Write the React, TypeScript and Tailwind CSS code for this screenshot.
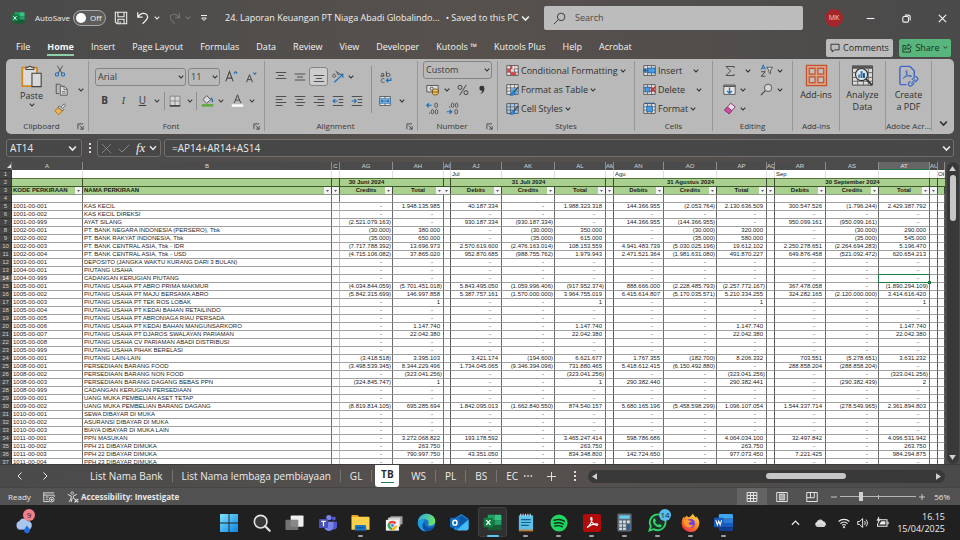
import type { ReactNode } from "react"
import clsx from "clsx"

/* ------------------------------------------------------------------ data */

type Row = [code: string, name: string, values: string]

// Values run Jun (credits, total), Jul, Agu, Sep (debits, credits, total each).
const EMPTY = "- - - - - - - - - - -"

const ROWS: Row[] = [
  ["1001-00-001", "KAS KECIL", "- 1.948.135.985 40.187.334 - 1.988.323.318 144.366.955 (2.053.764) 2.130.636.509 300.547.526 (1.796.244) 2.429.387.792"],
  ["1001-00-002", "KAS KECIL DIREKSI", EMPTY],
  ["1001-00-999", "AYAT SILANG", "(2.521.079.163) - 930.187.334 (930.187.334) - 144.366.955 (144.366.955) - 950.099.161 (950.099.161) -"],
  ["1002-00-001", "PT. BANK NEGARA INDONESIA (PERSERO), Tbk", "(30.000) 380.000 - (30.000) 350.000 - (30.000) 320.000 - (30.000) 290.000"],
  ["1002-00-002", "PT. BANK RAKYAT INDONESIA, Tbk", "(35.000) 650.000 - (35.000) 615.000 - (35.000) 580.000 - (35.000) 545.000"],
  ["1002-00-003", "PT. BANK CENTRAL ASIA, Tbk - IDR", "(7.717.788.392) 13.696.973 2.570.619.600 (2.476.163.014) 108.153.559 4.941.483.739 (5.030.025.196) 19.612.102 2.250.278.651 (2.264.694.283) 5.196.470"],
  ["1002-00-004", "PT. BANK CENTRAL ASIA, Tbk - USD", "(4.715.106.082) 37.865.020 952.870.685 (988.755.762) 1.979.943 2.471.521.364 (1.981.631.080) 491.870.227 649.876.458 (521.092.472) 620.654.213"],
  ["1003-00-001", "DEPOSITO (JANGKA WAKTU KURANG DARI 3 BULAN)", EMPTY],
  ["1004-00-001", "PIUTANG USAHA", EMPTY],
  ["1004-00-999", "CADANGAN KERUGIAN PIUTANG", EMPTY],
  ["1005-00-001", "PIUTANG USAHA PT ABRO PRIMA MAKMUR", "(4.034.844.059) (5.701.451.018) 5.843.495.050 (1.059.996.406) (917.952.374) 888.666.000 (2.228.485.793) (2.257.772.167) 367.478.058 - (1.890.294.109)"],
  ["1005-00-002", "PIUTANG USAHA PT MAJU BERSAMA ABRO", "(5.842.315.699) 146.997.858 5.387.757.161 (1.570.000.000) 3.964.755.019 6.415.614.807 (5.170.035.571) 5.210.334.255 324.282.165 (2.120.000.000) 3.414.616.420"],
  ["1005-00-003", "PIUTANG USAHA PT TEK ROS LOBAK", "- 1 - - 1 - - 1 - - 1"],
  ["1005-00-004", "PIUTANG USAHA PT KEDAI BAHAN RETAILINDO", EMPTY],
  ["1005-00-005", "PIUTANG USAHA PT ABRONIAGA RIAU PERSADA", EMPTY],
  ["1005-00-006", "PIUTANG USAHA PT KEDAI BAHAN MANGUNSARKORO", "- 1.147.740 - - 1.147.740 - - 1.147.740 - - 1.147.740"],
  ["1005-00-007", "PIUTANG USAHA PT DJAROS SWALAYAN PARIAMAN", "- 22.042.380 - - 22.042.380 - - 22.042.380 - - 22.042.380"],
  ["1005-00-008", "PIUTANG USAHA CV PARIAMAN ABADI DISTRIBUSI", EMPTY],
  ["1005-00-999", "PIUTANG USAHA PIHAK BERELASI", EMPTY],
  ["1006-00-001", "PIUTANG LAIN-LAIN", "(3.418.518) 3.395.103 3.421.174 (194.600) 6.621.677 1.767.355 (182.700) 8.206.332 703.551 (5.278.651) 3.631.232"],
  ["1008-00-001", "PERSEDIAAN BARANG FOOD", "(3.498.539.345) 8.344.229.496 1.734.045.065 (9.346.394.096) 731.880.465 5.418.612.415 (6.150.492.880) - 288.858.204 (288.858.204) -"],
  ["1008-00-002", "PERSEDIAAN BARANG NON FOOD", "- (323.041.256) - - (323.041.256) - - (323.041.256) - - (323.041.256)"],
  ["1008-00-003", "PERSEDIAAN BARANG DAGANG BEBAS PPN", "(324.845.747) 1 - - 1 290.382.440 - 290.382.441 - (290.382.439) 2"],
  ["1008-00-999", "CADANGAN KERUGIAN PERSEDIAAN", EMPTY],
  ["1009-00-001", "UANG MUKA PEMBELIAN ASET TETAP", EMPTY],
  ["1009-00-002", "UANG MUKA PEMBELIAN BARANG DAGANG", "(8.819.814.105) 695.285.694 1.842.095.013 (1.662.840.550) 874.540.157 5.680.165.196 (5.458.598.299) 1.096.107.054 1.544.337.714 (278.549.965) 2.361.894.803"],
  ["1010-00-001", "SEWA DIBAYAR DI MUKA", EMPTY],
  ["1010-00-002", "ASURANSI DIBAYAR DI MUKA", EMPTY],
  ["1010-00-003", "BIAYA DIBAYAR DI MUKA LAIN", EMPTY],
  ["1011-00-001", "PPN MASUKAN", "- 3.272.068.822 193.178.592 - 3.465.247.414 598.786.686 - 4.064.034.100 32.497.842 - 4.096.531.942"],
  ["1011-00-002", "PPH 21 DIBAYAR DIMUKA", "- 263.750 - - 263.750 - - 263.750 - - 263.750"],
  ["1011-00-003", "PPH 22 DIBAYAR DIMUKA", "- 790.997.750 43.351.050 - 834.348.800 142.724.650 - 977.073.450 7.221.425 - 984.294.875"],
  ["1011-00-004", "PPH 23 DIBAYAR DIMUKA", EMPTY],
]

type Col = { id: string; width: string; label?: string; month?: string; title?: string; gap?: boolean }

const COLS: Col[] = [
  { id: "A", width: "w-[71px]", label: "KODE PERKIRAAN" },
  { id: "B", width: "", label: "NAMA PERKIRAAN" },
  { id: "C", width: "w-[8px]", gap: true },
  { id: "AG", width: "w-[53px]", label: "Credits", title: "30 Juni 2024" },
  { id: "AH", width: "w-[51px]", label: "Total" },
  { id: "AI", width: "w-[7px]", gap: true },
  { id: "AJ", width: "w-[51px]", label: "Debits", month: "Jul" },
  { id: "AK", width: "w-[53px]", label: "Credits", title: "31 Juli 2024" },
  { id: "AL", width: "w-[51px]", label: "Total" },
  { id: "AM", width: "w-[8px]", gap: true },
  { id: "AN", width: "w-[50px]", label: "Debits", month: "Agu" },
  { id: "AO", width: "w-[53px]", label: "Credits", title: "31 Agustus 2024" },
  { id: "AP", width: "w-[50px]", label: "Total" },
  { id: "AQ", width: "w-[8px]", gap: true },
  { id: "AR", width: "w-[51px]", label: "Debits", month: "Sep" },
  { id: "AS", width: "w-[53px]", label: "Credits", title: "30 September 2024" },
  { id: "AT", width: "w-[51px]", label: "Total" },
  { id: "AU", width: "w-[8px]", gap: true },
  { id: "", width: "w-[7px]", month: "Ok" },
]

/* ----------------------------------------------------------------- icons */

type IconProps = { box?: string; className?: string; children: ReactNode }

function Icon({ box = "0 0 16 16", className = "size-3", children }: IconProps) {
  return (
    <svg viewBox={box} className={clsx("shrink-0", className)} fill="none" stroke="currentColor" aria-hidden="true">
      {children}
    </svg>
  )
}

function Chevron({ className = "h-1.5 w-1.5" }: { className?: string }) {
  return (
    <Icon box="0 0 8 8" className={className}>
      <path d="M1 2.2 4 5.4 7 2.2" strokeWidth="1.4" />
    </Icon>
  )
}

/** Grid glyph shared by the Styles and Cells commands. */
function GridGlyph({ children, fill = "#e9e9e9" }: { children?: ReactNode; fill?: string }) {
  return (
    <Icon className="size-[13px]">
      <path d="M1 2h14v12H1z" fill={fill} stroke="#444" />
      <path d="M1 6h14M1 10h14M5.5 2v12M10.5 2v12" stroke="#444" strokeWidth=".8" />
      {children}
    </Icon>
  )
}

const brush = (
  <g>
    <path d="m15 5-6 7" stroke="#444" strokeWidth="1.6" />
    <path d="M9.5 10.5c-2 0-3 1.5-3 3-.6.8-1 1-2 1.2 2.5 1.3 6 1 6.5-2z" fill="#2b88d8" stroke="#1a5fa5" strokeWidth=".6" />
  </g>
)

function AlignLines({ widths, align, top = 3 }: { widths: number[]; align: "l" | "c" | "r"; top?: number }) {
  return (
    <Icon className="size-3">
      {widths.map((w, i) => {
        const x = align === "l" ? 1 : align === "c" ? 8 - w / 2 : 15 - w
        return <path key={i} d={`M${x} ${top + i * 4}h${w}`} strokeWidth="1.2" stroke="#444" />
      })}
    </Icon>
  )
}

function ExcelLogo({ className = "size-[18px]" }: { className?: string }) {
  return (
    <Icon box="0 0 32 32" className={className}>
      <g stroke="none">
        <path d="M9 3h11v9H8V4z" fill="#21a366" />
        <path d="M20 3h9a2 2 0 0 1 2 2v7H20z" fill="#33c481" />
        <path d="M8 12h12v8H8z" fill="#107c41" />
        <path d="M20 12h11v8H20z" fill="#21a366" />
        <path d="M8 20h23v7a2 2 0 0 1-2 2H10a2 2 0 0 1-2-2z" fill="#185c37" />
        <rect x="1" y="8" width="16" height="16" rx="1.5" fill="#107c41" />
      </g>
      <path d="m5.5 12 7 8M12.5 12l-7 8" stroke="#fff" strokeWidth="2.2" />
    </Icon>
  )
}

/* ------------------------------------------------------------- title bar */

function TitleBar() {
  return (
    <header className="flex h-9 shrink-0 items-center text-[#f0f0f0]">
      <div className="flex min-w-0 flex-1 items-center">
        <ExcelLogo className="ml-[11px] size-[14px]" />
        <label htmlFor="autosave" className="ml-[10px] w-[38px] shrink-0 whitespace-nowrap text-[8px] leading-3">
          AutoSave
        </label>
        <button
          id="autosave"
          type="button"
          role="switch"
          aria-checked="false"
          className="flex h-4 w-[33px] shrink-0 items-center gap-1 rounded-full border border-[#a8a8a8] bg-[#5c5c5c] pl-[2px] text-[8px]"
        >
          <span className="size-[10px] rounded-full bg-white" />
          Off
        </button>
        <button type="button" aria-label="Save" className="ml-2">
          <Icon className="size-[14px]">
            <path d="M1.5 1.5h13v13h-11l-2-2z" strokeWidth="1.2" />
            <path d="M4.5 1.5v5h7v-5M4.5 14.5V9.5h7v5M7 12v2" strokeWidth="1.2" />
          </Icon>
        </button>
        <button type="button" aria-label="Undo" className="ml-2 flex items-center gap-1">
          <Icon className="size-[14px]">
            <path d="M2 1.5v5.5h5.5M2.3 6.7C5 2.5 10 1.3 12.5 4.500c2.3 3-.3 5.5-5 10" strokeWidth="1.4" />
          </Icon>
          <Chevron />
        </button>
        <button type="button" aria-label="Redo" className="ml-2 flex items-center gap-1 text-[#777]">
          <Icon className="size-[13px]">
            <path d="M14 1.5v5.5H8.5M13.7 6.700C11 2.5 6 1.3 3.5 4.5c-2.3 3 .3 5.5 5 10" strokeWidth="1.3" />
          </Icon>
          <Chevron />
        </button>
        <button type="button" aria-label="Customize toolbar" className="ml-[9px]">
          <Icon box="0 0 8 8" className="size-2">
            <path d="M1 1.5h6M1.7 4 4 6.5 6.3 4z" />
          </Icon>
        </button>
        <button type="button" className="ml-[17px] flex items-center gap-[6px] whitespace-nowrap text-[9px]">
          <span>24. Laporan Keuangan PT Niaga Abadi Globalindo...</span>
          <span className="flex items-center gap-[3px]">
            • Saved to this PC <Chevron className="size-[9px]" />
          </span>
        </button>
      </div>
      <label className="flex h-6 w-[259px] shrink-0 items-center gap-[9px] rounded-[2px] bg-[#bcbcbc] px-[9px] text-[#3c3c3c]">
        <Icon className="size-[13px]">
          <circle cx="10" cy="6" r="4.6" strokeWidth="1.2" />
          <path d="m6.5 9.5-5.5 5.5" strokeWidth="1.2" />
        </Icon>
        <input
          type="text"
          placeholder="Search"
          aria-label="Search"
          className="min-w-0 flex-1 bg-transparent text-[9px] placeholder:text-[#4a4a4a]"
        />
      </label>
      <div className="flex w-[157px] shrink-0 items-center gap-[9px] pl-[22px]">
        <button type="button" className="size-[18px] shrink-0 rounded-full bg-[#a4262c] text-[7px] text-[#f0dada]">
          MK
        </button>
        <div className="flex flex-1">
          <button type="button" aria-label="Minimize" className="flex w-9 justify-center">
            <Icon className="size-[9px]">
              <path d="M1 8h14" strokeWidth="2" />
            </Icon>
          </button>
          <button type="button" aria-label="Restore" className="flex w-9 justify-center">
            <Icon className="size-[9px]">
              <rect x="1.5" y="4.5" width="10" height="10" rx="2" strokeWidth="2" />
              <path d="M5 2h6.5a3 3 0 0 1 3 3v6.5" strokeWidth="2" />
            </Icon>
          </button>
          <button type="button" aria-label="Close" className="flex w-9 justify-center">
            <Icon className="size-[9px]">
              <path d="m1.5 1.5 13 13M14.5 1.5l-13 13" strokeWidth="2.2" />
            </Icon>
          </button>
        </div>
      </div>
    </header>
  )
}

const TABS = [
  "File", "Home", "Insert", "Page Layout", "Formulas", "Data", "Review", "View",
  "Developer", "Kutools ™", "Kutools Plus", "Help", "Acrobat",
]

function RibbonTabs() {
  return (
    <nav className="flex h-[23px] shrink-0 items-center pr-[9px] pl-4 text-[9px] text-[#f4f4f4]">
      <div className="flex flex-1 gap-[17px]">
        {TABS.map((t) => (
          <button
            key={t}
            type="button"
            className={clsx(
              "h-4 border-b-2 whitespace-nowrap",
              t === "Home" ? "border-[#8fd0ac] font-bold" : "border-transparent",
            )}
          >
            {t}
          </button>
        ))}
      </div>
      <button type="button" className="flex h-[18px] w-[67px] items-center justify-center gap-[3px] rounded-[2px] bg-[#bcbcbc] text-[9px] text-[#2a2a2a]">
        <Icon className="size-[10px]">
          <path d="M1.5 2h13v9H7l-3.5 3.500V11h-2z" strokeWidth="1.4" />
        </Icon>
        Comments
      </button>
      <button type="button" className="ml-[6px] flex h-[18px] w-[52px] items-center justify-center gap-[3px] rounded-[2px] bg-[#58b57c] text-[9px] text-[#173322]">
        <Icon className="size-[10px]">
          <path d="M6 4H1.5v10.5h12V10" strokeWidth="1.4" />
          <path d="M10 1.5 15 6l-5 4.500V8c-3 0-4.500 1-5.500 3 0-4 2-6.500 5.500-7z" strokeWidth="1.3" />
        </Icon>
        Share
        <Chevron className="size-[5px]" />
      </button>
    </nav>
  )
}

/* ---------------------------------------------------------------- ribbon */

type GroupProps = { label: string; width: string; launcher?: boolean; children: ReactNode }

function Group({ label, width, launcher, children }: GroupProps) {
  return (
    <section className={clsx("flex shrink-0 flex-col border-r border-[#b9b9b9] py-[2px]", width)}>
      <div className="-mr-px flex h-[70px] border-r border-[#979797] pb-3">{children}</div>
      <div className={clsx("-mt-[11px] flex h-3 items-center text-[8px] leading-3 text-[#383838]", launcher && "pr-px")}>
        <span className="flex-1 text-center whitespace-nowrap">{label}</span>
        {launcher && (
          <button type="button" aria-label={`${label} settings`} className="w-[10px]">
            <Icon className="size-[7px]">
              <path d="M2 14V2h12M6 6l8 8M14 7v7H7" strokeWidth="1.8" />
            </Icon>
          </button>
        )}
      </div>
    </section>
  )
}

function Tool({ label, width, children, className }: { label: string; width: string; children: ReactNode; className?: string }) {
  return (
    <button type="button" aria-label={label} title={label} className={clsx("flex h-[19px] shrink-0 items-center justify-center", width, className)}>
      {children}
    </button>
  )
}

function Combo({ label, value, width }: { label: string; value: string; width: string }) {
  return (
    <div className={clsx("relative h-[18px] shrink-0 text-[9px]", width)}>
      <select aria-label={label} className="size-full appearance-none rounded-[3px] border border-[#858585] pl-[2px] text-[#3a3a3a]">
        <option>{value}</option>
      </select>
      <span className="pointer-events-none absolute top-[6px] right-[2px]">
        <Chevron />
      </span>
    </div>
  )
}

function Command({ icon, label, gap = "ml-[2px]" }: { icon: ReactNode; label: string; gap?: string }) {
  return (
    <button type="button" className="flex h-[19px] items-center text-[9px] whitespace-nowrap">
      {icon}
      <span className="ml-[2px]">{label}</span>
      <Chevron className={clsx("size-1.5", gap)} />
    </button>
  )
}

function BigTool({ icon, lines }: { icon: ReactNode; lines: string[] }) {
  return (
    <button type="button" className="flex flex-1 flex-col items-center pt-[3px] text-[9px] leading-3">
      {icon}
      <span className="mt-[2px]">
        {lines.map((l) => (
          <span key={l} className="block whitespace-nowrap">{l}</span>
        ))}
      </span>
    </button>
  )
}

function Ribbon() {
  return (
    <div className="mx-[6px] flex h-[75px] shrink-0 rounded-[5px] bg-[#b9b9b9] text-[#2f2f2f]">
      <Group label="Clipboard" width="w-[83px]" launcher>
        <button type="button" className="ml-[11px] flex w-[29px] flex-col items-center pt-[3px] text-[9px] leading-3">
          <Icon box="0 0 24 26" className="h-6 w-[23px]">
            <path d="M2 4h16v20H2z" fill="#dcdcdc" stroke="#d28a1c" strokeWidth="2" />
            <path d="M6 6V3.500h2.500a2 2 0 0 1 3.500 0h2.500V6z" fill="#ddd" stroke="#444" strokeWidth="1.1" />
            <path d="M12.500 10h10v14.500h-10z" fill="#d9d9d9" stroke="#444" strokeWidth="1.2" />
          </Icon>
          <span className="mt-[2px]">Paste</span>
          <Chevron />
        </button>
        <div className="ml-[2px] flex flex-col">
          <Tool label="Cut" width="w-6">
            <Icon className="size-3">
              <path d="m4.500 1 6 10M11.500 1l-6 10" stroke="#444" strokeWidth="1.1" />
              <circle cx="4" cy="12.5" r="2.2" stroke="#1f6fb8" strokeWidth="1.4" />
              <circle cx="12" cy="12.5" r="2.2" stroke="#1f6fb8" strokeWidth="1.4" />
            </Icon>
          </Tool>
          <Tool label="Copy" width="w-[38px]" className="gap-[10px] pl-[4px]">
            <Icon className="size-[13px]">
              <path d="M5 13H1.500V1.500H6l2 2" stroke="#444" />
              <path d="M6.500 4h5l3.500 3.500V15H6.500z" fill="#ddd" stroke="#444" />
              <path d="M11 4v4h4M8.500 10.500h4.500M8.500 12.500h4.500" stroke="#444" strokeWidth=".8" />
            </Icon>
            <Chevron />
          </Tool>
          <Tool label="Format Painter" width="w-6">
            <Icon className="size-3">
              <path d="m9.500 5 4-4 2 2-4 4" fill="#ddd" stroke="#444" />
              <path d="m7 4 6 5-1.500 1.500-6-5z" fill="#eee" stroke="#444" />
              <path d="m5 6 6 5-5 4.500L1 10c2-.5 3-2 4-4z" fill="#efb54a" stroke="#9a6a14" />
            </Icon>
          </Tool>
        </div>
      </Group>

      <Group label="Font" width="w-[176px]" launcher>
        <div className="flex flex-col gap-[5px] pt-[6px] pl-[6px]">
          <div className="flex items-center gap-[2px]">
            <Combo label="Font" value="Arial" width="w-[91px]" />
            <Combo label="Font size" value="11" width="w-8" />
            <Tool label="Increase font size" width="w-[18px]">
              <Icon className="size-[13px]">
                <path d="m1 14 4.500-12L10 14M2.500 10h6" strokeWidth="1.3" stroke="#444" />
                <path d="m11 4.500 2-2.500 2 2.500" stroke="#1f6fb8" strokeWidth="1.5" />
              </Icon>
            </Tool>
            <Tool label="Decrease font size" width="w-[18px]">
              <Icon className="size-3">
                <path d="m2 15 4-10 4 10M3.500 11.500h5" strokeWidth="1.3" stroke="#444" />
                <path d="m11 2 2 2.500L15 2" stroke="#1f6fb8" strokeWidth="1.5" />
              </Icon>
            </Tool>
          </div>
          <div className="flex items-center text-[10px] text-[#3a3a3a]">
            <Tool label="Bold" width="w-[19px]"><b>B</b></Tool>
            <Tool label="Italic" width="w-[19px]"><i className="font-['Liberation_Serif',serif]">I</i></Tool>
            <Tool label="Underline" width="w-[19px]"><u>U</u></Tool>
            <Tool label="Underline style" width="w-[10px]"><Chevron /></Tool>
            <span className="mx-[2px] h-[18px] w-px bg-[#8f8f8f]" />
            <Tool label="Borders" width="w-4">
              <Icon className="size-3">
                <path d="M1.500 1.500h13v13h-13zM8 1.500v13M1.500 8h13" stroke="#777" fill="#d6d6d6" />
                <path d="M1 14.500h14" stroke="#222" strokeWidth="1.6" />
              </Icon>
            </Tool>
            <Tool label="Border style" width="w-[13px]"><Chevron /></Tool>
            <span className="h-[18px] w-px bg-[#8f8f8f]" />
            <Tool label="Fill color" width="w-5">
              <Icon className="size-[13px]">
                <path d="m7 2 5 5-5 4.500L2.500 7z" fill="#ddd" stroke="#444" />
                <path d="M12 5c2 1 2.500 3 2 5" stroke="#1f6fb8" strokeWidth="1.6" />
                <path d="M1 14h14" stroke="#5fa83a" strokeWidth="3" />
              </Icon>
            </Tool>
            <Tool label="Fill colors" width="w-2"><Chevron /></Tool>
            <Tool label="Font color" width="w-6">
              <Icon className="size-[13px]">
                <path d="m4 11 4-10 4 10M5.500 7.500h5" stroke="#444" strokeWidth="1.2" />
                <path d="M1 14.200h14" stroke="#fff" strokeWidth="3" />
              </Icon>
            </Tool>
            <Tool label="Font colors" width="w-1.5"><Chevron /></Tool>
          </div>
        </div>
      </Group>

      <Group label="Alignment" width="w-[153px]" launcher>
        <div className="flex flex-col gap-[5px] pt-[6px] pl-[6px]">
          <div className="flex">
            <Tool label="Top align" width="w-[19px]"><AlignLines widths={[14, 8, 14]} align="c" top={2} /></Tool>
            <Tool label="Middle align" width="w-[19px]"><AlignLines widths={[14, 8, 14]} align="c" top={4} /></Tool>
            <Tool label="Bottom align" width="w-[19px]" className="rounded-[3px] border border-[#858585] bg-[#cdcdcd]">
              <AlignLines widths={[14, 8, 14]} align="c" top={6} />
            </Tool>
            <Tool label="Orientation" width="w-[19px]">
              <Icon className="size-[13px]">
                <path d="M3 5.500a1.800 1.800 0 1 0 2.500 2M2.500 5.500c2-1.500 3 .5 3.500 2.500M6 1l3 5M7.500 3.500c2-1.500 4 1.500 1.500 3" stroke="#444" />
                <path d="m4 15 10-9M10.500 5.500H14.500V9.500" stroke="#1f6fb8" strokeWidth="1.5" />
              </Icon>
            </Tool>
            <Tool label="Orientation menu" width="w-2"><Chevron /></Tool>
          </div>
          <div className="flex">
            <Tool label="Align left" width="w-[19px]"><AlignLines widths={[14, 9, 14, 9]} align="l" top={2} /></Tool>
            <Tool label="Center" width="w-[19px]"><AlignLines widths={[14, 9, 14, 9]} align="c" top={2} /></Tool>
            <Tool label="Align right" width="w-[19px]"><AlignLines widths={[14, 9, 14, 9]} align="r" top={2} /></Tool>
            <Tool label="Decrease indent" width="w-[19px]">
              <Icon>
                <path d="M1 2h14M9 6h6M9 10h6M1 14h14" stroke="#444" strokeWidth="1.2" />
                <path d="M7.500 8H1.500M4 5.500 1.500 8 4 10.500" stroke="#1f6fb8" strokeWidth="1.5" />
              </Icon>
            </Tool>
            <Tool label="Increase indent" width="w-[19px]">
              <Icon>
                <path d="M1 2h14M9 6h6M9 10h6M1 14h14" stroke="#444" strokeWidth="1.2" />
                <path d="M1 8h6M4.500 5.500 7 8l-2.500 2.500" stroke="#1f6fb8" strokeWidth="1.5" />
              </Icon>
            </Tool>
          </div>
        </div>
        <span className="mt-[5px] ml-[5px] h-[47px] w-px shrink-0 bg-[#8f8f8f]" />
        <div className="flex flex-col gap-[5px] pt-[6px] pl-[2px]">
          <Tool label="Wrap text" width="w-6">
            <Icon className="size-3">
              <path d="M1.500 4C3 2.500 5 3 5 4.500V7.500M5 5.500C3 5 1 5.500 1 6.700s3 1.200 4-.4M8.500.5v7M8.500 5c0-2.500 5-2.500 5 .3S8.500 8 8.500 5.500M6 10.500c-2-1-4.500 0-4.500 2.300s2.500 3 4.500 2" stroke="#444" strokeWidth="1.1" />
              <path d="M14.500 9v3.500h-6M11 10l-2.500 2.500L11 15" stroke="#1f6fb8" strokeWidth="1.5" />
            </Icon>
          </Tool>
          <div className="flex">
            <Tool label="Merge and center" width="w-[22px]">
              <Icon className="size-3">
                <path d="M1 2h14v12H1z" fill="#e6e6e6" stroke="#444" />
                <path d="M8 2v12" stroke="#444" />
                <path d="M1 5h14v6H1z" fill="#8cc4ee" stroke="#1f6fb8" />
                <path d="M3 8h10M5 6.500 3 8l2 1.500M11 6.500 13 8l-2 1.500" stroke="#123f6b" />
              </Icon>
            </Tool>
            <Tool label="Merge menu" width="w-3"><Chevron /></Tool>
          </div>
        </div>
      </Group>

      <Group label="Number" width="w-[80px]" launcher>
        <div className="flex flex-col pl-[5px]">
          <Combo label="Number format" value="Custom" width="w-[69px]" />
          <div className="mt-[1px] flex">
            <Tool label="Accounting format" width="w-[18px]">
              <Icon className="size-[13px]">
                <path d="M1 3h14v8H1z" fill="#ddd" stroke="#444" />
                <circle cx="7" cy="7" r="2" stroke="#444" />
                <path d="M8 8.500c0-1.500 7-1.500 7 0v5c0 1.500-7 1.500-7 0z" fill="#efc467" stroke="#6b4a0c" />
                <path d="M8 10.500c1 1 6 1 7 0" stroke="#6b4a0c" />
              </Icon>
            </Tool>
            <Tool label="Accounting menu" width="w-3"><Chevron /></Tool>
            <Tool label="Percent" width="w-5">
              <Icon className="size-3">
                <circle cx="4" cy="4.5" r="2.7" stroke="#444" strokeWidth="1.3" />
                <circle cx="12" cy="11.5" r="2.7" stroke="#444" strokeWidth="1.3" />
                <path d="m12.500 1-9 14" stroke="#444" strokeWidth="1.3" />
              </Icon>
            </Tool>
            <Tool label="Comma style" width="w-[18px]">
              <Icon className="size-3">
                <path d="M8 2.500a3.200 3.200 0 1 0 .5 6.300C8 11 7 12.500 5.500 13.500c4-1 6-4.500 5.700-8A3.200 3.200 0 0 0 8 2.500z" fill="#333" stroke="none" />
              </Icon>
            </Tool>
          </div>
          <div className="flex">
            <Tool label="Increase decimal" width="w-[19px]">
              <Icon className="size-[13px]">
                <path d="M7 4H1M3.500 1.500 1 4l2.500 2.500" stroke="#1f6fb8" strokeWidth="1.5" />
                <ellipse cx="12.5" cy="4" rx="1.8" ry="2.7" stroke="#444" />
                <ellipse cx="8" cy="12" rx="1.6" ry="2.7" stroke="#444" />
                <ellipse cx="13" cy="12" rx="1.6" ry="2.7" stroke="#444" />
                <path d="M4 14h1" stroke="#444" strokeWidth="1.5" />
              </Icon>
            </Tool>
            <Tool label="Decrease decimal" width="w-5">
              <Icon className="size-[13px]">
                <path d="M1 12h6M4.500 9.500 7 12l-2.500 2.500" stroke="#1f6fb8" strokeWidth="1.5" />
                <ellipse cx="8" cy="4" rx="1.6" ry="2.7" stroke="#444" />
                <ellipse cx="13" cy="4" rx="1.6" ry="2.7" stroke="#444" />
                <ellipse cx="12.5" cy="12" rx="1.8" ry="2.7" stroke="#444" />
                <path d="M4 6h1" stroke="#444" strokeWidth="1.5" />
              </Icon>
            </Tool>
          </div>
        </div>
      </Group>

      <Group label="Styles" width="w-[137px]">
        <div className="flex flex-col pl-2">
          <Command
            label="Conditional Formatting"
            icon={
              <GridGlyph>
                <path d="M5.500 2.500h5v3.500h-5zM1.500 6h4v4h-4zM5.500 10h7v3.500h-7z" fill="#d9434e" stroke="none" />
                <path d="M8 2.500h2.500v3.500H8z" fill="#fff" stroke="none" />
              </GridGlyph>
            }
          />
          <Command
            label="Format as Table"
            icon={
              <GridGlyph>
                <path d="M6 6.500h8v7H6z" fill="#5aa7e6" stroke="none" />
                {brush}
              </GridGlyph>
            }
          />
          <Command label="Cell Styles" icon={<GridGlyph fill="#a9cfee">{brush}</GridGlyph>} />
        </div>
      </Group>

      <Group label="Cells" width="w-[78px]">
        <div className="flex flex-col pl-2">
          <Command
            label="Insert"
            gap="ml-[11px]"
            icon={
              <GridGlyph>
                <path d="M6 5h9v6H6z" fill="#4b9be0" stroke="#1a5fa5" />
                <path d="M6 8H1M3.500 5.500 1 8l2.500 2.500" stroke="#1a5fa5" strokeWidth="1.6" />
              </GridGlyph>
            }
          />
          <Command
            label="Delete"
            gap="ml-[11px]"
            icon={
              <GridGlyph>
                <path d="M2.500 5h6v6h-6z" fill="#4b9be0" stroke="#1a5fa5" />
                <path d="m9.500 5 5.500 6M15 5l-5.500 6" stroke="#c4262e" strokeWidth="1.6" />
              </GridGlyph>
            }
          />
          <Command
            label="Format"
            icon={
              <GridGlyph>
                <path d="M4.500 5h7v7h-7z" fill="#4b9be0" stroke="#1a5fa5" />
                <path d="M3 1.500h10M3 .5v2M13 .5v2" stroke="#1a5fa5" />
              </GridGlyph>
            }
          />
        </div>
      </Group>

      <Group label="Editing" width="w-[80px]">
        <div className="flex flex-col pl-2">
          <Tool label="AutoSum" width="w-[29px]" className="gap-[9px] pl-1">
            <Icon className="size-3">
              <path d="M13.500 4V2H2.500L9 8l-6.500 6h11v-2" stroke="#444" strokeWidth="1.2" />
            </Icon>
            <Chevron />
          </Tool>
          <Tool label="Fill" width="w-[26px]" className="gap-1">
            <Icon className="size-[13px]">
              <path d="M1 2.500h14v11.500H1z" fill="#e4e4e4" stroke="#444" />
              <path d="M1 4h14" stroke="#444" strokeWidth="1.6" />
              <path d="M8 5.500v7M5 9.700l3 3 3-3" stroke="#1f6fb8" strokeWidth="1.6" />
            </Icon>
            <Chevron />
          </Tool>
          <Tool label="Clear" width="w-[26px]" className="gap-1">
            <Icon className="size-[13px]">
              <path d="M9.500 1.500 15 6l-7.500 8.500L2 10z" fill="#ecdfe8" stroke="#8a2c6c" strokeWidth="1.1" />
              <path d="m5.500 6 5.500 4.700-3.500 3.800L2 10z" fill="#cf4fa2" stroke="#8a2c6c" strokeWidth="1.1" />
            </Icon>
            <Chevron />
          </Tool>
        </div>
        <div className="flex flex-col pl-[9px]">
          <Tool label="Sort and filter" width="w-6" className="gap-1">
            <Icon className="size-[13px]">
              <path d="m1.500 7 2.500-6 2.500 6M2.500 5h3" stroke="#1f6fb8" strokeWidth="1.2" />
              <path d="M1.500 9.500h5l-5 5.500h5" stroke="#444" strokeWidth="1.2" />
              <path d="M8 4h7.500L13 7.500V12l-2-1.500v-3z" stroke="#444" fill="#ddd" />
            </Icon>
            <Chevron />
          </Tool>
          <Tool label="Find and select" width="w-6" className="gap-1">
            <Icon className="size-[13px]">
              <circle cx="10" cy="6" r="4.6" stroke="#444" fill="#d2d2d2" />
              <path d="m6.500 9.500-5.500 5.500" stroke="#444" strokeWidth="1.4" />
            </Icon>
            <Chevron />
          </Tool>
        </div>
      </Group>

      <Group label="Add-ins" width="w-[47px]">
        <BigTool
          lines={["Add-ins"]}
          icon={
            <Icon box="0 0 24 24" className="size-[23px]">
              <path d="M1.500 1.500h21v21h-21z" fill="#dba18a" stroke="#c2532b" strokeWidth="1.3" />
              <path d="M4.500 4.500h6v6h-6zM13.500 4.500h6v6h-6zM4.500 13.500h6v6h-6zM13.500 13.500h6v6h-6z" fill="#c4bdb9" stroke="#c2532b" strokeWidth="1.2" />
            </Icon>
          }
        />
      </Group>

      <Group label="" width="w-[46px]">
        <BigTool
          lines={["Analyze", "Data"]}
          icon={
            <Icon box="0 0 24 24" className="size-[23px]">
              <path d="M1.500 2h21v20h-21z" fill="#dcdcdc" stroke="#444" />
              <path d="M1.500 2h21v3h-21z" fill="#555" stroke="none" />
              <path d="M1.500 9h21M1.500 14h21M1.500 18h21M7 5v17M13 5v17M18 5v17" stroke="#666" />
              <circle cx="11" cy="11" r="6.3" fill="#d8e6f2" stroke="#333" strokeWidth="1.2" />
              <path d="m15.500 15.500 6.500 6.500" stroke="#333" strokeWidth="1.8" />
              <path d="M7.500 11h2v3.500h-2z" fill="#777" stroke="none" />
              <path d="M10 7.500h2v7h-2z" fill="#1f6fb8" stroke="none" />
              <path d="M12.500 9.500h2v5h-2z" fill="#1a4f80" stroke="none" />
            </Icon>
          }
        />
      </Group>

      <Group label="Adobe Acr..." width="w-[46px]">
        <BigTool
          lines={["Create", "a PDF"]}
          icon={
            <Icon box="0 0 24 24" className="size-[23px]">
              <g stroke="#3f67c9" strokeWidth="1.5">
                <path d="M10 21.500H5a2 2 0 0 1-2-2v-15a2 2 0 0 1 2-2h8.500L18 7v6" />
                <path d="M6.500 15c2-1 4.500-5 4-7.500-.3-1.500-1.500-.8-1.200.5.500 3 3 5 5 5.200 1.500 0 1.200-1.200-.3-1.200-3 0-5.500 1.300-7.500 3z" strokeWidth="1" />
                <path d="m14 18-1.500 1.500a2.100 2.100 0 0 0 3 3L18 20M18.500 19l2.500-2a2.100 2.100 0 0 0-3-3L15.500 16.500M15 20.500l4-4.500" strokeWidth="1.3" />
              </g>
            </Icon>
          }
        />
      </Group>

      <div className="flex flex-1 items-end justify-center pb-[6px]">
        <button type="button" aria-label="Collapse ribbon">
          <Chevron className="size-[9px]" />
        </button>
      </div>
    </div>
  )
}

/* ----------------------------------------------------------- formula bar */

function FormulaBar() {
  const box = "flex h-[18px] items-center rounded-[3px] border border-[#707070] bg-[#474747]"
  return (
    <div className="flex h-7 shrink-0 items-center px-[6px] text-[10px] text-[#ececec]">
      <div className={clsx(box, "w-[76px] pr-1")}>
        <input aria-label="Name box" defaultValue="AT14" className="min-w-0 flex-1 bg-transparent pl-[3px]" />
        <Chevron className="size-[9px]" />
      </div>
      <span className="flex w-[15px] flex-col items-center gap-[2px]">
        <i className="size-[2px] bg-[#ddd]" />
        <i className="size-[2px] bg-[#ddd]" />
        <i className="size-[2px] bg-[#ddd]" />
      </span>
      <div className={clsx(box, "w-[64px] gap-[6px] pl-[3px]")}>
        <button type="button" aria-label="Cancel" className="text-[#8a8a8a]">
          <Icon className="size-[11px]">
            <path d="m1.500 1.500 13 13M14.500 1.500l-13 13" strokeWidth="1.3" />
          </Icon>
        </button>
        <button type="button" aria-label="Enter" className="text-[#8a8a8a]">
          <Icon className="size-3">
            <path d="m1 9 4.500 4.500L15 3.500" strokeWidth="1.3" />
          </Icon>
        </button>
        <button type="button" aria-label="Insert function" className="flex items-center gap-1 font-['Liberation_Serif',serif] text-[13px] leading-3 italic">
          fx
          <Chevron className="size-2" />
        </button>
      </div>
      <div className={clsx(box, "ml-[3px] flex-1 pr-[2px]")}>
        <input aria-label="Formula" defaultValue="=AP14+AR14+AS14" className="min-w-0 flex-1 bg-transparent pl-[7px]" />
        <Chevron className="size-[9px]" />
      </div>
    </div>
  )
}

/* ----------------------------------------------------------------- sheet */

function FilterButton({ column }: { column: string }) {
  return (
    <button
      type="button"
      aria-label={`Filter column ${column}`}
      className="absolute right-0 bottom-0 flex size-[7px] items-center justify-center bg-[#f4f4f8]"
    >
      <svg viewBox="0 0 4 2" className="h-[2px] w-[3px]" aria-hidden="true">
        <path d="M0 0h4L2 2z" fill="#333" />
      </svg>
    </button>
  )
}

function RowHead({ n, active }: { n: number; active?: boolean }) {
  return (
    <th
      scope="row"
      className={clsx(
        "border-t border-r border-[#333] text-center font-normal",
        active ? "border-r-[#2f9e62] bg-[#5c5c5c] text-white" : "bg-[#464646] text-[#cfcfcf]",
      )}
    >
      {n}
    </th>
  )
}

function valuePadding(v: string) {
  if (v === "-") return "pr-[10px]"
  return v.startsWith("(") ? "pr-px" : "pr-[3px]"
}

function Sheet() {
  return (
    <div className="min-w-0 flex-1 overflow-hidden bg-white">
      <table className="w-full table-fixed border-separate border-spacing-0 font-['Liberation_Sans',Arial,sans-serif] text-[6px] leading-[7px] whitespace-nowrap text-[#1c1c1c]">
        <colgroup>
          <col className="w-3" />
          {COLS.map((c) => (
            <col key={c.id} className={c.width} />
          ))}
        </colgroup>
        <thead>
          <tr className="bg-[#4b4b4b] text-[#d8d8d8]">
            <th aria-label="Select all" className="h-2 border-r border-[#777]">
              <svg viewBox="0 0 4 4" className="ml-auto size-1" aria-hidden="true">
                <path d="M4 0v4H0z" fill="#e0e0e0" />
              </svg>
            </th>
            {COLS.map((c) => (
              <th
                key={c.id}
                scope="col"
                className={clsx(
                  "h-2 overflow-hidden border-r border-[#8c8c8c] font-normal",
                  c.id === "AT" && "bg-[#666] text-[#e8e8e8] shadow-[inset_0_-1px_0_#1f7a46]",
                )}
              >
                {c.id}
              </th>
            ))}
          </tr>
        </thead>
        <tbody>
          <tr>
            <RowHead n={1} />
            {COLS.map((c) => (
              <td key={c.id} className={clsx("h-2 border-t border-r border-t-white border-r-[#dedede]", c.id ? "pl-px" : "overflow-hidden")}>
                {c.month}
              </td>
            ))}
          </tr>
          <tr className="bg-[#a9d08e] font-bold">
            <RowHead n={2} />
            {COLS.map((c) => {
              // month blocks read as one merged cell, so only the outer edges get a line
              const edge = c.gap || c.label === "Total" || c.id === "A" || c.id === "B"
              return (
                <td key={c.id} className={clsx("h-2 border-t border-t-[#55703f]", edge && "border-r border-r-[#3f4a38]")}>
                  <div className="flex justify-center">{c.title}</div>
                </td>
              )
            })}
          </tr>
          <tr className="bg-[#a9d08e] font-bold">
            <RowHead n={3} />
            {COLS.map((c) => (
              <td
                key={c.id}
                className={clsx(
                  "relative h-2 border-t border-r border-t-[#3c5a2a] border-r-[#3f4a38]",
                  c.id === "A" || c.id === "B" ? "pl-px" : "text-center",
                )}
              >
                {c.label}
                {c.id && <FilterButton column={c.id} />}
              </td>
            ))}
          </tr>
          <tr>
            <RowHead n={4} />
            {COLS.map((c) => (
              <td key={c.id} className="h-2 border-t border-r border-t-[#8c9a83] border-r-[#6c6c6c]" />
            ))}
          </tr>
          {ROWS.map(([code, name, line], r) => {
            const values = line.split(" ")
            let next = 0
            return (
              <tr key={code}>
                <RowHead n={r + 5} active={r + 5 === 14} />
                {COLS.map((c) => {
                  const base = "h-2 border-t border-r border-t-[#a0a0a0]"
                  if (c.id === "A" || c.id === "B") {
                    return (
                      <td key={c.id} className={clsx(base, "border-r-[#6c6c6c] pl-px")}>
                        {c.id === "A" ? code : name}
                      </td>
                    )
                  }
                  if (!c.label) {
                    return <td key={c.id} className={clsx(base, c.id === "C" ? "border-r-[#c4c4c4]" : "border-r-[#555]")} />
                  }
                  const v = values[next++]
                  const selected = c.id === "AT" && r + 5 === 14
                  return (
                    <td key={c.id} className={clsx(base, "border-r-[#6c6c6c] text-right", valuePadding(v), selected && "relative")}>
                      {v}
                      {selected && (
                        <span className="absolute -top-px -right-px -bottom-px -left-px z-10 border border-[#1f7a46]">
                          <i className="absolute -right-[2px] -bottom-[2px] size-[3px] bg-[#1f7a46]" />
                        </span>
                      )}
                    </td>
                  )
                })}
              </tr>
            )
          })}
        </tbody>
      </table>
    </div>
  )
}

function VerticalScroll() {
  return (
    <div className="flex w-[15px] shrink-0 justify-center bg-[#4c4c4c]">
      <div className="flex w-3 flex-col items-center rounded-full bg-[#393939] py-[4px]">
        <svg viewBox="0 0 8 6" className="h-[5px] w-[7px]" aria-hidden="true"><path d="M4 0 8 6H0z" fill="#d0d0d0" /></svg>
        <span className="mt-1 h-[46px] w-[6px] rounded-full bg-[#c6c6c6]" />
        <svg viewBox="0 0 8 6" className="mt-auto h-[5px] w-[7px]" aria-hidden="true"><path d="M4 6 8 0H0z" fill="#d0d0d0" /></svg>
      </div>
    </div>
  )
}

/* ---------------------------------------------------- sheet tabs, status */

function SheetTabs() {
  const tab = "h-3 shrink-0 border-r border-[#757575] px-[9px] leading-3 whitespace-nowrap"
  return (
    <div className="flex h-[23px] shrink-0 items-center border-t border-[#3c3c3c] text-[10px] text-[#ececec]">
      <div className="flex w-[81px] shrink-0 gap-[17px] pl-4">
        <button type="button" aria-label="Previous sheet">
          <Icon box="0 0 8 8" className="size-2"><path d="M5.500.500 2 4l3.500 3.500" /></Icon>
        </button>
        <button type="button" aria-label="Next sheet">
          <Icon box="0 0 8 8" className="size-2"><path d="M2.500.500 6 4 2.500 7.500" /></Icon>
        </button>
      </div>
      <button type="button" className={tab}>List Nama Bank</button>
      <button type="button" className={tab}>List Nama lembaga pembiayaan</button>
      <button type="button" className={tab}>GL</button>
      <button type="button" className="mx-[3px] flex h-[22px] w-6 shrink-0 justify-center self-start rounded-b-[3px] bg-white pt-[2px] font-bold text-[#2b2b2b]">
        <span className="h-4 border-b border-[#1f7a46] leading-[15px]">TB</span>
      </button>
      <button type="button" className={tab}>WS</button>
      <button type="button" className={tab}>PL</button>
      <button type="button" className={tab}>BS</button>
      <button type="button" className="h-3 shrink-0 pl-[9px] text-left leading-3">EC</button>
      <button type="button" aria-label="More sheets" className="ml-[5px]">
        <Icon box="0 0 10 4" className="h-1 w-[10px]">
          <path d="M1 2h1.500M4.300 2h1.500M7.600 2h1.500" strokeWidth="1.6" />
        </Icon>
      </button>
      <button type="button" aria-label="New sheet" className="ml-[14px]">
        <Icon box="0 0 10 10" className="size-[9px]"><path d="M5 0v10M0 5h10" /></Icon>
      </button>
      <span className="ml-[18px] flex flex-col gap-[2px]">
        <i className="size-[2px] bg-[#ddd]" />
        <i className="size-[2px] bg-[#ddd]" />
        <i className="size-[2px] bg-[#ddd]" />
      </span>
      <div className="mr-[15px] ml-3 flex h-[13px] flex-1 items-center rounded-full bg-[#393939] px-1">
        <svg viewBox="0 0 6 8" className="h-[7px] w-[5px]" aria-hidden="true"><path d="M0 4 6 0v8z" fill="#d0d0d0" /></svg>
        <span className="flex flex-1 justify-end pr-[90px]">
          <span className="h-[6px] w-[80px] rounded-full bg-[#c6c6c6]" />
        </span>
        <svg viewBox="0 0 6 8" className="h-[7px] w-[5px]" aria-hidden="true"><path d="M6 4 0 0v8z" fill="#d0d0d0" /></svg>
      </div>
    </div>
  )
}

function StatusBar() {
  return (
    <div className="flex h-[18px] shrink-0 items-center border-t border-[#454545] bg-[#525252] pl-2 text-[8px] text-[#e6e6e6]">
      <span className="w-[35px]">Ready</span>
      <button type="button" aria-label="Record macro">
        <Icon className="size-3">
          <path d="M1 2.500h14M1 2v12h7M1 5.500h14V8M3.500 8h4M3.500 11h3" strokeWidth="1.2" />
          <circle cx="11.5" cy="11.5" r="3.2" strokeWidth="1.2" />
          <circle cx="11.5" cy="11.5" r="1" fill="currentColor" />
        </Icon>
      </button>
      <button type="button" className="ml-3 flex items-center gap-[2px] font-bold">
        <Icon className="size-3">
          <circle cx="7" cy="2.8" r="1.7" />
          <path d="M1 4.500 5.500 6.500v3L3 14.500M13 4.500 8.500 6.500v2.500L10 11M7 9.500l-1.500 5" strokeWidth="1.3" />
          <path d="m10 10.500 5 4.500M15 10.500 10 15" strokeWidth="1.4" />
        </Icon>
        Accessibility: Investigate
      </button>
      <div className="ml-auto flex h-full items-center">
        <button type="button" aria-label="Normal view" className="flex h-full w-[30px] items-center justify-center bg-[#636363]">
          <Icon className="size-3"><path d="M1.500 2h13v12h-13zM1.500 6h13M1.500 10h13M6 2v12M10 2v12" strokeWidth="1.3" /></Icon>
        </button>
        <button type="button" aria-label="Page layout view" className="flex w-[30px] justify-center">
          <Icon className="size-3">
            <path d="M1 2h14v12H1z" strokeWidth="1.3" />
            <path d="M4.500 4h7v8h-7z" fill="#aaa" />
          </Icon>
        </button>
        <button type="button" aria-label="Page break view" className="flex w-[30px] justify-center">
          <Icon className="size-3"><path d="M1 2h14v12H1zM6 2v7M11 2v7H1" strokeWidth="1.3" /></Icon>
        </button>
        <button type="button" aria-label="Zoom out" className="ml-1 flex">
          <Icon box="0 0 6 6" className="size-[6px]"><path d="M0 3h6" strokeWidth=".8" /></Icon>
        </button>
        <div className="relative mx-[3px] flex h-3 w-[76px] items-center">
          <input
            type="range"
            aria-label="Zoom"
            min={10}
            max={180}
            defaultValue={56}
            className="h-px w-full appearance-none bg-[#b5b5b5] [&::-webkit-slider-thumb]:h-[9px] [&::-webkit-slider-thumb]:w-1 [&::-webkit-slider-thumb]:appearance-none [&::-webkit-slider-thumb]:bg-[#d0d0d0]"
          />
          <span className="absolute top-1 left-[38px] h-1 w-px bg-[#c4c4c4]" />
        </div>
        <button type="button" aria-label="Zoom in" className="flex">
          <Icon box="0 0 6 6" className="size-[6px]"><path d="M0 3h6M3 0v6" strokeWidth=".8" /></Icon>
        </button>
        <span className="w-[35px] pr-[10px] text-right">56%</span>
      </div>
    </div>
  )
}

/* --------------------------------------------------------------- taskbar */

type App = { name: string; running?: boolean; active?: boolean; badge?: string; art: ReactNode }

const APPS: App[] = [
  {
    name: "Start",
    art: (
      <Icon box="0 0 20 20" className="size-[18px]">
        <defs>
          <linearGradient id="win" x1="0" y1="0" x2="1" y2="1">
            <stop offset="0" stopColor="#7fe3ff" />
            <stop offset="1" stopColor="#0a84e0" />
          </linearGradient>
        </defs>
        <path d="M0 0h9.500v9.500H0zM10.500 0H20v9.500h-9.500zM0 10.500h9.500V20H0zM10.500 10.500H20V20h-9.500z" fill="url(#win)" stroke="none" />
      </Icon>
    ),
  },
  {
    name: "Search",
    art: (
      <Icon box="0 0 20 20" className="size-[18px]">
        <circle cx="8.5" cy="8.5" r="7" fill="#3a3a3a" stroke="#e4e4e4" strokeWidth="1.8" />
        <path d="m13.500 13.500 5 5" stroke="#e4e4e4" strokeWidth="2.4" strokeLinecap="round" />
      </Icon>
    ),
  },
  {
    name: "Task view",
    art: (
      <Icon box="0 0 20 20" className="size-[19px]">
        <rect x="6" y="2.5" width="13.5" height="12" rx="1" fill="#efefef" stroke="none" />
        <rect x=".5" y="7" width="13.5" height="11" rx="1" fill="#7c7c7c" fillOpacity=".9" stroke="none" />
      </Icon>
    ),
  },
  {
    name: "Teams",
    art: (
      <Icon box="0 0 20 20" className="size-[18px]">
        <g stroke="none">
          <circle cx="16.5" cy="5" r="2.2" fill="#5059c9" />
          <circle cx="11" cy="4" r="3" fill="#7b83eb" />
          <path d="M14 8.500h6v5.500c0 3-3 4-5 3z" fill="#5059c9" />
          <path d="M6 8.500h10v6c0 6-10 6-10 0z" fill="#7b83eb" />
          <rect x="0" y="5.5" width="10" height="10" rx="1" fill="#4650b8" />
        </g>
        <path d="M2.500 8.200h5M5 8.200v5.300" stroke="#fff" strokeWidth="1.4" />
      </Icon>
    ),
  },
  {
    name: "File Explorer",
    running: true,
    art: (
      <Icon box="0 0 20 20" className="size-[19px]">
        <g stroke="none">
          <path d="M.5 3a1 1 0 0 1 1-1H7l2 2.500H.5z" fill="#e3a21a" />
          <path d="M.5 4h18a1 1 0 0 1 1 1v12.500H.5z" fill="#fbd04b" />
          <path d="M4 18.500V14a1.500 1.500 0 0 1 1.500-1.500h9A1.500 1.500 0 0 1 16 14v4.500z" fill="#1a78c8" />
          <path d="M6 15h8v1.200H6z" fill="#0c4f8c" />
        </g>
      </Icon>
    ),
  },
  {
    name: "Chrome windows",
    art: (
      <Icon box="0 0 20 20" className="size-[18px]">
        <g stroke="none">
          <rect x="6" y="2.5" width="13.5" height="9" fill="#9a9a9a" />
          <rect x="3.5" y="4" width="13.5" height="10" fill="#d4d4d4" />
          <rect x="1" y="6.5" width="14.5" height="12" fill="#f4f4f4" />
          <path d="M8.200 12.700 3.700 10A5.200 5.200 0 0 1 12.700 10z" fill="#ea4335" />
          <path d="M8.200 12.700 3.700 10a5.200 5.200 0 0 0 4 7.900z" fill="#34a853" />
          <path d="M8.200 12.700h5.200A5.200 5.200 0 0 1 7.700 17.900z" fill="#fbbc05" />
        </g>
        <circle cx="8.2" cy="12.7" r="2.2" fill="#4285f4" stroke="#fff" strokeWidth=".8" />
      </Icon>
    ),
  },
  {
    name: "Edge",
    art: (
      <Icon box="0 0 20 20" className="size-[19px]">
        <defs>
          <linearGradient id="edge" x1="0" y1="0" x2="1" y2=".3">
            <stop offset="0" stopColor="#29a8e8" />
            <stop offset="1" stopColor="#6be06c" />
          </linearGradient>
        </defs>
        <g stroke="none">
          <circle cx="10" cy="10" r="9.3" fill="#1673c9" />
          <path d="M1 8.500C2.500 3 6.500.7 10.300.7c5.500 0 9.200 4 9 8.300-.2 3-2.800 4.300-5 4.300-2 0-3-.8-2.500-1.800C13 9 11.500 6.500 8.500 6.500 5 6.500 2 8 1 8.500z" fill="url(#edge)" />
          <path d="M8 8.500c-3 2.500-2.500 8 2 10.700-5 .5-9-4-9.200-9C2 6.500 6.500 6 8 8.500z" fill="#1b9de2" />
          <path d="M8.200 9c-1.500 4 2.500 8 7.800 6 1-.4 1.600-.2 1 .8-2 3-6 3.700-8 3C5 17 5 11 8.200 9z" fill="#0d4f9e" />
        </g>
      </Icon>
    ),
  },
  {
    name: "Outlook",
    art: (
      <Icon box="0 0 20 20" className="size-[19px]">
        <g stroke="none">
          <path d="m12 1 7.500 5v10a2 2 0 0 1-2 2H6a2 2 0 0 1-2-2V6z" fill="#1b86da" />
          <path d="m12 2.500 7 4.500-9 7-5.500-6.500z" fill="#0a57a8" />
          <path d="M19.500 7v9.500a2 2 0 0 1-2 1.800H7z" fill="#42bdf5" />
          <rect x="0" y="5" width="10.5" height="10.5" rx="1.5" fill="#0f6cbd" />
        </g>
        <ellipse cx="5.2" cy="10.2" rx="2.2" ry="2.6" stroke="#fff" strokeWidth="1.5" />
      </Icon>
    ),
  },
  { name: "Excel", active: true, art: <ExcelLogo className="size-[19px]" /> },
  {
    name: "Notepad",
    running: true,
    art: (
      <Icon box="0 0 20 20" className="size-[19px]">
        <path d="M3 2.500h15V18H3z" fill="#5cc0e8" stroke="none" />
        <path d="M3 17.500h15v1.800H3z" fill="#c77b33" stroke="none" />
        <path d="M5.500 7h10M5.500 10h10M5.500 13h8" stroke="#175f8a" strokeWidth="1.3" />
        <path d="M5 .8v3M7.500.8v3M10 .8v3M12.500.8v3M15 .8v3" stroke="#bcdff0" strokeWidth="1.2" />
      </Icon>
    ),
  },
  {
    name: "Spotify",
    running: true,
    art: (
      <Icon box="0 0 20 20" className="size-[18px]">
        <circle cx="10" cy="10" r="9.5" fill="#1ed760" stroke="none" />
        <path d="M4.500 7c4-1.200 8.500-.8 11.500 1M5 10.300c3.500-1 7-.6 10 .9M5.500 13.300c3-.7 5.800-.4 8.300.9" stroke="#10301c" strokeWidth="1.6" strokeLinecap="round" />
      </Icon>
    ),
  },
  {
    name: "Acrobat",
    running: true,
    art: (
      <Icon box="0 0 20 20" className="size-[18px]">
        <rect x="0" y="0" width="20" height="20" rx="2.5" fill="#b30b0b" stroke="none" />
        <path d="M4.500 15c2.500-1.300 6-7 5.500-10-.3-1.800-1.700-1-1.300.6.8 4 4 6.700 6.500 7 1.800.1 1.500-1.600-.3-1.600-4 0-7.500 1.700-10.400 4z" stroke="#fff" strokeWidth="1.3" />
      </Icon>
    ),
  },
  {
    name: "Calculator",
    running: true,
    art: (
      <Icon box="0 0 20 20" className="size-[19px]">
        <g stroke="none">
          <rect x="2.5" y=".5" width="15" height="19" rx="1.5" fill="#5f6b75" />
          <path d="M4.500 2.500h11v3.500h-11z" fill="#68cdf0" />
          <path d="M4.500 8h2.800v2.800H4.500zM8.500 8h2.800v2.800H8.500zM4.500 11.800h2.800v2.800H4.500zM8.500 11.800h2.800v2.800H8.500zM4.500 15.500h2.800v2.500H4.500zM8.500 15.500h2.800v2.500H8.500zM12.600 8h2.900v2.800h-2.900z" fill="#d5dde2" />
          <path d="M12.600 11.800h2.900V18h-2.900z" fill="#1d5f9c" />
        </g>
      </Icon>
    ),
  },
  {
    name: "WhatsApp",
    running: true,
    badge: "14",
    art: (
      <Icon box="0 0 20 20" className="size-[19px]">
        <path d="M1.500 18.500 3 14a8.300 8.300 0 1 1 3 3z" fill="#20302a" stroke="#2fd366" strokeWidth="1.9" />
        <path d="M7 5.500 8.500 8l-1 1.500c.7 1.500 1.600 2.300 3 3l1.500-1 2.500 1.300c0 1.700-1.500 2.400-3 2.200-3.500-.6-6-3.500-6.300-6.300C5 7 5.800 5.500 7 5.500z" fill="#2fd366" stroke="none" />
      </Icon>
    ),
  },
  {
    name: "Firefox",
    running: true,
    art: (
      <Icon box="0 0 20 20" className="size-[19px]">
        <defs>
          <linearGradient id="fox" x1=".8" y1="0" x2=".2" y2="1">
            <stop offset="0" stopColor="#ffe14a" />
            <stop offset=".5" stopColor="#ff8a1f" />
            <stop offset="1" stopColor="#f0264f" />
          </linearGradient>
        </defs>
        <g stroke="none">
          <path d="M12.500.5c.5 2 2 3 3.500 4.500.3-.7.200-1.200.200-1.700 2 2 3.300 5 3.100 7.700a9.300 9.300 0 0 1-18.600-.5C.7 7.500 2 5 3.300 3.500c0 .8.200 1.400.5 1.900C4.500 4 5.500 3 6.500 2.500c0 .9.400 1.500 1 2 1.500-.3 4-1.500 5-4z" fill="url(#fox)" />
          <circle cx="10" cy="11" r="4.8" fill="#7a3fe0" />
          <path d="M3 8c2-1.500 4-1 5.500 0l2.500.5c-.5 1.500-2.500 1.500-3 2 0 2 2.500 3 5 1.500-1 3.500-6 4.500-8.500 1.500C3.300 12 2.800 10 3 8z" fill="#ff9b2a" />
        </g>
      </Icon>
    ),
  },
  {
    name: "Word",
    running: true,
    art: (
      <Icon box="0 0 20 20" className="size-[19px]">
        <g stroke="none">
          <path d="M5 2.500A1.500 1.500 0 0 1 6.500 1h12A1.500 1.500 0 0 1 20 2.500V6H5z" fill="#41a5ee" />
          <path d="M5 6h15v4.500H5z" fill="#2b7cd3" />
          <path d="M5 10.500h15V15H5z" fill="#185abd" />
          <path d="M5 15h15v2.500a1.500 1.500 0 0 1-1.500 1.500h-12A1.500 1.500 0 0 1 5 17.500z" fill="#103f91" />
          <rect x="0" y="5" width="10" height="10" rx="1" fill="#185abd" />
        </g>
        <path d="m2 7.500 1.500 5L5 8.500l1.500 4 1.500-5" stroke="#fff" strokeWidth="1.1" />
      </Icon>
    ),
  },
]

function Taskbar() {
  return (
    <footer className="grid h-[35px] shrink-0 grid-cols-[212fr_528px_220fr] items-center bg-[#202021] text-[#ededed]">
      <button type="button" aria-label="Weather" className="relative ml-[14px] w-[22px] pt-1">
        <Icon box="0 0 22 18" className="h-[18px] w-[22px]">
          <path d="M5.500 13.500a4.500 4.500 0 0 1 0-8.500c1-3 6.500-3.500 8 0 5-.5 6 7 1.500 8.500z" fill="#a9c6ee" stroke="none" />
          <path d="M3 12c3 1.500 10 1.500 14 0-.5 1-1 1.500-2 1.500H5.500c-1 0-2-.5-2.500-1.500z" fill="#7fa4e0" stroke="none" />
          <path d="M13 9.500c2 2.500 2.800 3.800 2.800 5a2.800 2.800 0 0 1-5.600 0c0-1.200.8-2.500 2.800-5z" fill="#1d6fe0" stroke="none" />
        </Icon>
        <span className="absolute -top-[3px] left-[9px] flex size-3 items-center justify-center rounded-full bg-[#f2808a] text-[8px] text-[#33151a]">9</span>
      </button>
      <nav className="flex">
        {APPS.map((a) => (
          <button
            key={a.name}
            type="button"
            aria-label={a.name}
            className="relative flex h-[35px] w-[33px] flex-col items-center justify-center"
          >
            {a.active && <span className="absolute inset-x-[2px] top-[2px] bottom-[3px] rounded-[3px] border border-[#414141] bg-[#303031]" />}
            <span className="relative">{a.art}</span>
            {a.badge && (
              <span className="absolute top-[4px] right-[3px] flex size-3 items-center justify-center rounded-full bg-[#57bdec] text-[8px] text-[#10283a]">
                {a.badge}
              </span>
            )}
            {a.active && <span className="absolute bottom-[3px] h-[2px] w-3 rounded-full bg-[#5fc3f2]" />}
            {a.running && <span className="absolute bottom-[3px] h-[2px] w-[5px] rounded-full bg-[#a0a0a0]" />}
          </button>
        ))}
      </nav>
      <div className="flex items-center justify-end gap-[7px] pr-[15px]">
        <Icon box="0 0 10 10" className="mr-[7px] size-[9px]"><path d="M1 7.500 5 3.500l4 4" strokeWidth="1.3" /></Icon>
        <Icon className="mr-1 size-[13px]">
          <path d="M4 13.500a3.500 3.500 0 0 1-.3-6.500c1-3.500 6.500-3.500 7.500-.5 3.500-.2 4.500 5.500 1.300 7z" fill="#d2d2d2" stroke="none" />
          <path d="m1.500 10 7-3 6.500 4" stroke="#fff" strokeWidth=".8" />
        </Icon>
        <Icon className="size-3">
          <path d="M.8 6a10.500 10.500 0 0 1 14.400 0M3.200 8.700a7 7 0 0 1 9.600 0M5.500 11.300a3.600 3.600 0 0 1 5 0" strokeWidth="1.4" />
          <circle cx="8" cy="13.5" r="1" fill="currentColor" />
        </Icon>
        <Icon className="size-3">
          <path d="M1 6h2.500L7.500 2v12l-4-4H1zM10 5.500c1.300 1.500 1.300 3.500 0 5M12 3.500c2.500 2.500 2.500 6.500 0 9" strokeWidth="1.3" />
        </Icon>
        <Icon className="size-[13px]">
          <path d="M5 4.500h8.500v8H2V9" strokeWidth="1.3" />
          <path d="M6.500 6.500h5v4H4z" fill="currentColor" stroke="none" />
          <path d="M14.800 7v3" strokeWidth="1.5" />
          <path d="M3.500 1 1 5.500h2L2.500 9 5.500 4h-2z" fill="currentColor" strokeWidth=".5" />
        </Icon>
        <div className="w-[49px] text-right text-[9px] leading-3 whitespace-nowrap">
          <div>16.15</div>
          <div>15/04/2025</div>
        </div>
      </div>
    </footer>
  )
}

export default function App() {
  return (
    <div className="flex h-screen flex-col overflow-hidden bg-linear-to-r from-[#4a4a4a] via-[#57514d] to-[#4a4a4a] font-['Open_Sans','Noto_Sans',sans-serif]">
      <TitleBar />
      <RibbonTabs />
      <Ribbon />
      <FormulaBar />
      <main className="flex min-h-0 flex-1">
        <Sheet />
        <VerticalScroll />
      </main>
      <SheetTabs />
      <StatusBar />
      <Taskbar />
    </div>
  )
}
